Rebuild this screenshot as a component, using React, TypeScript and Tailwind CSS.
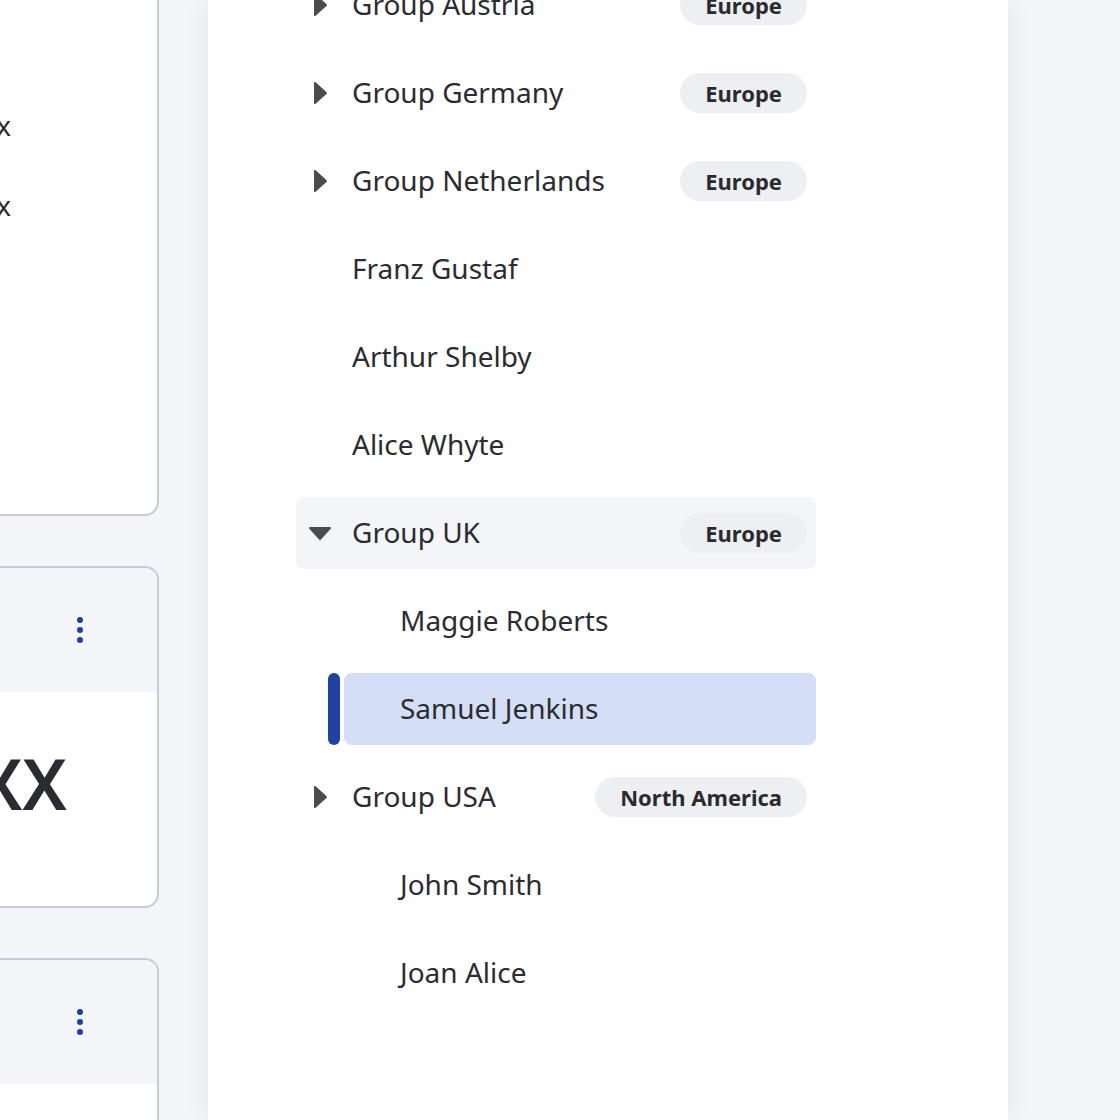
import React from "react";

type Node = {
  label: string;
  badge?: string;
  level: 0 | 1;
  kind: "group-closed" | "group-open" | "leaf";
  selected?: boolean;
};

const nodes: Node[] = [
  { label: "Group Austria", badge: "Europe", level: 0, kind: "group-closed" },
  { label: "Group Germany", badge: "Europe", level: 0, kind: "group-closed" },
  { label: "Group Netherlands", badge: "Europe", level: 0, kind: "group-closed" },
  { label: "Franz Gustaf", level: 0, kind: "leaf" },
  { label: "Arthur Shelby", level: 0, kind: "leaf" },
  { label: "Alice Whyte", level: 0, kind: "leaf" },
  { label: "Group UK", badge: "Europe", level: 0, kind: "group-open" },
  { label: "Maggie Roberts", level: 1, kind: "leaf" },
  { label: "Samuel Jenkins", level: 1, kind: "leaf", selected: true },
  { label: "Group USA", badge: "North America", level: 0, kind: "group-closed" },
  { label: "John Smith", level: 1, kind: "leaf" },
  { label: "Joan Alice", level: 1, kind: "leaf" },
];

const Caret = ({ open }: { open: boolean }) => (
  <svg width="24" height="24" viewBox="0 0 24 24" className="shrink-0">
    {open ? (
      <polygon
        points="2,7 22,7 12,18"
        fill="#4b4c52"
        stroke="#4b4c52"
        strokeWidth="2"
        strokeLinejoin="round"
      />
    ) : (
      <polygon
        points="7,2 18,12 7,22"
        fill="#4b4c52"
        stroke="#4b4c52"
        strokeWidth="2"
        strokeLinejoin="round"
      />
    )}
  </svg>
);

const Kebab = () => (
  <svg width="8" height="28" viewBox="0 0 8 28">
    <circle cx="4" cy="4" r="3" fill="#1f3fa6" />
    <circle cx="4" cy="14" r="3" fill="#1f3fa6" />
    <circle cx="4" cy="24" r="3" fill="#1f3fa6" />
  </svg>
);

const Badge = ({ text }: { text: string }) => (
  <span className="h-10 px-[25px] rounded-full bg-[#eeeff3] flex items-center text-[22px] font-bold text-[#2a2b30]">
    {text}
  </span>
);

const TreeRow = ({ node }: { node: Node }) => {
  if (node.level === 1) {
    return (
      <div className="flex h-[72px] pl-8">
        <div
          className={
            node.selected
              ? "w-3 rounded-full bg-[#2142a0]"
              : "w-3 rounded-full bg-transparent"
          }
        />
        <div
          className={
            node.selected
              ? "ml-1 flex-1 flex items-center pl-[56px] rounded-lg bg-[#d4def6]"
              : "ml-1 flex-1 flex items-center pl-[56px] rounded-lg"
          }
        >
          <span className="-mt-[2px] text-[28px] text-[#2b2c31]">{node.label}</span>
        </div>
      </div>
    );
  }
  return (
    <div
      className={
        node.kind === "group-open"
          ? "flex items-center h-[72px] pl-3 pr-[9px] rounded-lg bg-[#f4f5f9]"
          : "flex items-center h-[72px] pl-3 pr-[9px] rounded-lg"
      }
    >
      <div className="w-6 h-6 flex items-center justify-center">
        {node.kind !== "leaf" && <Caret open={node.kind === "group-open"} />}
      </div>
      <span className="ml-[20px] -mt-[2px] flex-1 text-[28px] text-[#2b2c31]">
        {node.label}
      </span>
      {node.badge && <Badge text={node.badge} />}
    </div>
  );
};

export default function App() {
  return (
    <div
      className="flex h-[1120px] w-[1120px] overflow-hidden bg-[#f4f5f9]"
      style={{ fontFamily: '"Noto Sans", "Open Sans", sans-serif' }}
    >
      {/* cards column, cut off on the left */}
      <div className="shrink-0 w-[400px] -ml-[241px] flex flex-col gap-[50px]">
        <div className="-mt-[40px] h-[556px] shrink-0 rounded-[14px] border-2 border-[#c6cbda] bg-white pt-[123px] pr-[146px] flex flex-col">
          <div className="h-[80px] flex items-center justify-end text-[28px] text-[#2b2c31]">
            Name: xxxx
          </div>
          <div className="h-[80px] flex items-center justify-end text-[28px] text-[#2b2c31]">
            Role: xxxx
          </div>
        </div>
        <div className="h-[342px] shrink-0 rounded-[14px] border-2 border-[#c6cbda] bg-white overflow-hidden flex flex-col">
          <div className="h-[124px] bg-[#f4f5f9] flex items-center justify-end pr-[73px]">
            <Kebab />
          </div>
          <div className="flex-1 flex items-center justify-end pr-[90px] pb-[32px] text-[70px] font-semibold text-[#2b2c31]">
            XX
          </div>
        </div>
        <div className="h-[342px] shrink-0 rounded-[14px] border-2 border-[#c6cbda] bg-white overflow-hidden flex flex-col">
          <div className="h-[124px] bg-[#f4f5f9] flex items-center justify-end pr-[73px]">
            <Kebab />
          </div>
          <div className="flex-1" />
        </div>
      </div>

      {/* tree panel */}
      <div className="shrink-0 ml-[49px] w-[800px] h-full bg-white shadow-[0_0_24px_rgba(30,35,60,0.08)] pl-[88px]">
        <div className="-mt-[31px] w-[520px] flex flex-col gap-4">
          {nodes.map((n, i) => (
            <TreeRow key={i} node={n} />
          ))}
        </div>
      </div>
    </div>
  );
}
